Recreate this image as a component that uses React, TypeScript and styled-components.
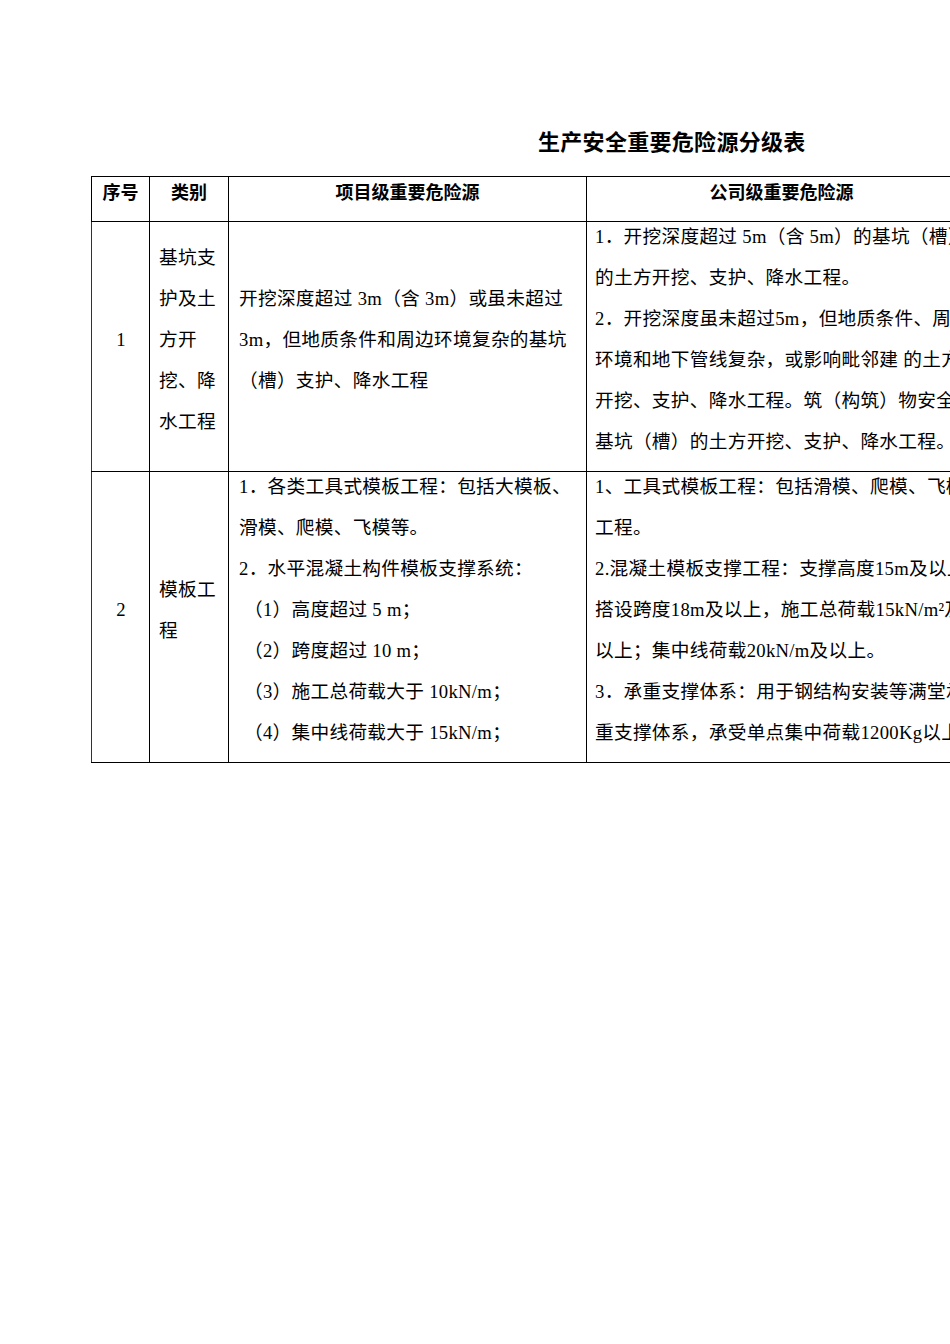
import React from "react";
import styled, { createGlobalStyle } from "styled-components";

const Global = createGlobalStyle`
  html, body { margin: 0; padding: 0; background: #fff; overflow: hidden; }
  body { font-family: "Liberation Serif", "Noto Sans CJK SC", serif; color: #000; }
`;

const Page = styled.div`
  width: 950px;
  height: 1344px;
  overflow: hidden;
  padding: 125px 0 0 91px;
  box-sizing: border-box;
`;

const Title = styled.h1`
  margin: 0 0 21px 447px;
  font-family: "Noto Sans CJK SC", sans-serif;
  font-weight: 700;
  font-size: 22px;
  line-height: 30px;
  white-space: nowrap;
  letter-spacing: 0.3px;
`;

const Table = styled.table`
  border-collapse: collapse;
  table-layout: fixed;
  width: 885px;
`;

const HeadCell = styled.th`
  border: 1px solid #000;
  padding: 0 4px 9px;
  vertical-align: middle;
  text-align: center;
  font-family: "Noto Sans CJK SC", sans-serif;
  font-weight: 700;
  font-size: 18px;
`;

const Cell = styled.td<{ $center?: boolean; $top?: boolean; $padLeft?: number }>`
  border: 1px solid #000;
  border-left-color: #333;
  padding: 0 9px 9px ${(p) => p.$padLeft ?? 10}px;
  vertical-align: ${(p) => (p.$top ? "top" : "middle")};
  text-align: ${(p) => (p.$center ? "center" : "left")};
  font-size: 18.67px;
  letter-spacing: 0.3px;
`;

const Lines = styled.div`
  margin-top: -6px;
  line-height: 41px;
`;

const Line = styled.div<{ $indent?: boolean }>`
  white-space: nowrap;
  padding-left: ${(p) => (p.$indent ? "5px" : "0")};
`;

type L = string | { t: string; indent: boolean };

const Block = ({ lines }: { lines: L[] }) => (
  <Lines>
    {lines.map((l, i) =>
      typeof l === "string" ? (
        <Line key={i}>{l}</Line>
      ) : (
        <Line key={i} $indent={l.indent}>
          {l.t}
        </Line>
      )
    )}
  </Lines>
);

const rows: {
  no: string;
  cat: L[];
  proj: L[];
  projTop: boolean;
  comp: L[];
}[] = [
  {
    no: "1",
    cat: ["基坑支", "护及土", "方开", "挖、降", "水工程"],
    proj: [
      "开挖深度超过 3m（含 3m）或虽未超过",
      "3m，但地质条件和周边环境复杂的基坑",
      "（槽）支护、降水工程",
    ],
    projTop: false,
    comp: [
      "1．开挖深度超过 5m（含 5m）的基坑（槽）",
      "的土方开挖、支护、降水工程。",
      "2．开挖深度虽未超过5m，但地质条件、周围",
      "环境和地下管线复杂，或影响毗邻建 的土方",
      "开挖、支护、降水工程。筑（构筑）物安全的",
      "基坑（槽）的土方开挖、支护、降水工程。",
    ],
  },
  {
    no: "2",
    cat: ["模板工", "程"],
    proj: [
      "1．各类工具式模板工程：包括大模板、",
      "滑模、爬模、飞模等。",
      "2．水平混凝土构件模板支撑系统：",
      { t: "（1）高度超过 5 m；", indent: true },
      { t: "（2）跨度超过 10 m；", indent: true },
      { t: "（3）施工总荷载大于 10kN/m；", indent: true },
      { t: "（4）集中线荷载大于 15kN/m；", indent: true },
    ],
    projTop: true,
    comp: [
      "1、工具式模板工程：包括滑模、爬模、飞模",
      "工程。",
      "2.混凝土模板支撑工程：支撑高度15m及以上，",
      "搭设跨度18m及以上，施工总荷载15kN/m²及",
      "以上；集中线荷载20kN/m及以上。",
      "3．承重支撑体系：用于钢结构安装等满堂承",
      "重支撑体系，承受单点集中荷载1200Kg以上。",
    ],
  },
];

export default function App() {
  return (
    <>
      <Global />
      <Page>
        <Title>生产安全重要危险源分级表</Title>
        <Table>
          <colgroup>
            <col style={{ width: 58 }} />
            <col style={{ width: 79 }} />
            <col style={{ width: 358 }} />
            <col style={{ width: 390 }} />
          </colgroup>
          <thead>
            <tr>
              <HeadCell>
                <Lines>序号</Lines>
              </HeadCell>
              <HeadCell>
                <Lines>类别</Lines>
              </HeadCell>
              <HeadCell>
                <Lines>项目级重要危险源</Lines>
              </HeadCell>
              <HeadCell>
                <Lines>公司级重要危险源</Lines>
              </HeadCell>
            </tr>
          </thead>
          <tbody>
            {rows.map((r) => (
              <tr key={r.no}>
                <Cell $center>
                  <Block lines={[r.no]} />
                </Cell>
                <Cell $padLeft={9}>
                  <Block lines={r.cat} />
                </Cell>
                <Cell $top={r.projTop}>
                  <Block lines={r.proj} />
                </Cell>
                <Cell $top $padLeft={8}>
                  <Block lines={r.comp} />
                </Cell>
              </tr>
            ))}
          </tbody>
        </Table>
      </Page>
    </>
  );
}
